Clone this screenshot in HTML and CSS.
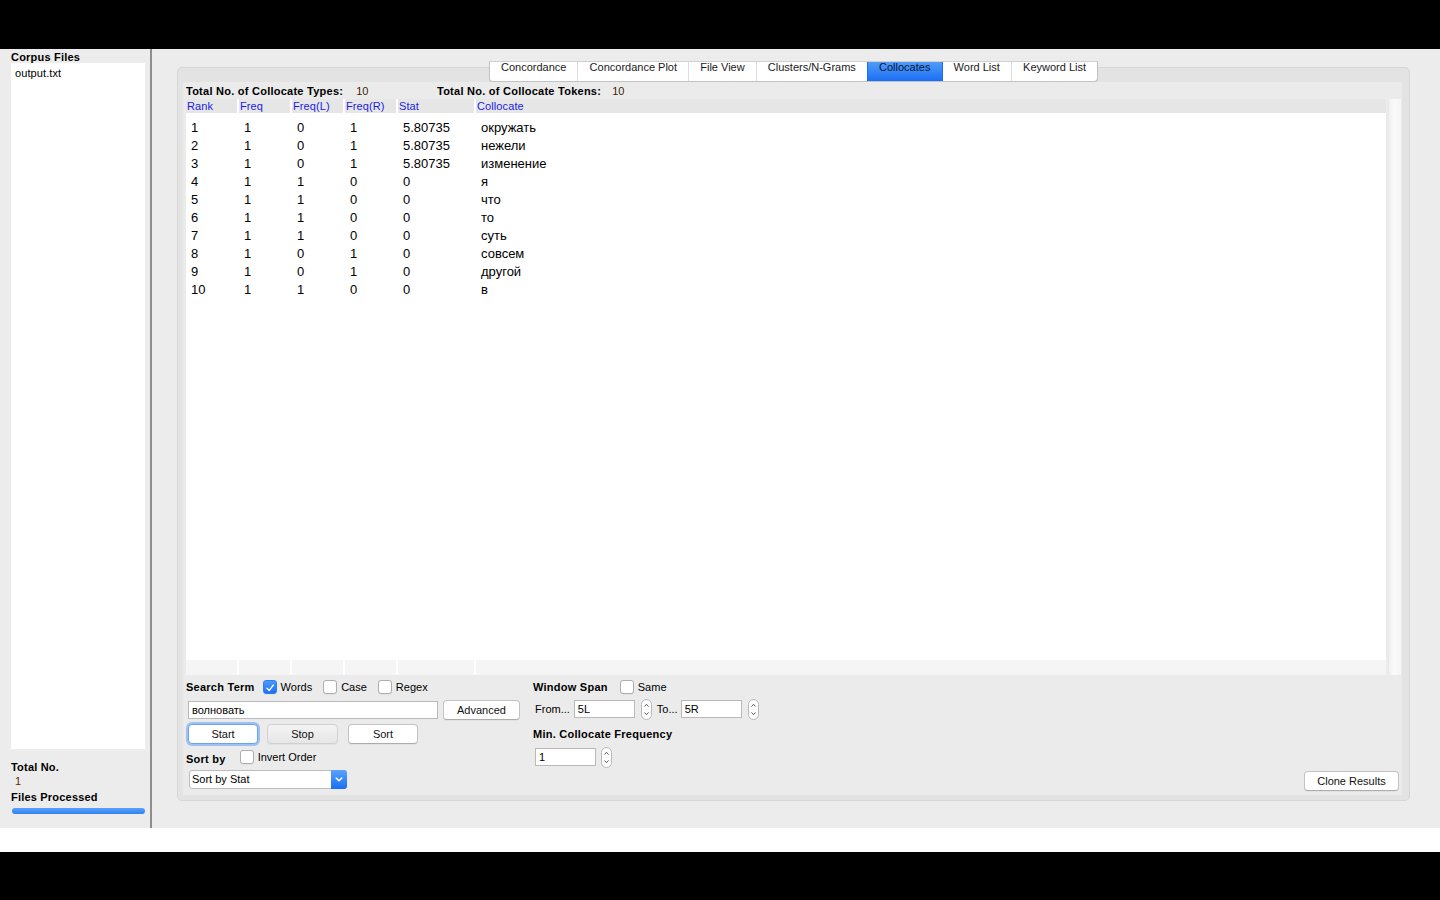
FILE: index.html
```html
<!DOCTYPE html>
<html lang="ru">
<head>
<meta charset="utf-8">
<title>AntConc - Collocates</title>
<link rel="stylesheet" href="styles.css">
</head>
<body>
<div class="screen">
  <div class="topbar"></div>
  <div class="app">
    <aside class="side">
      <div class="side-label">Corpus Files</div>
      <div class="file-list">
        <div class="file-item">output.txt</div>
      </div>
      <div class="side-bottom">
        <div class="side-label">Total No.</div>
        <div class="side-value">1</div>
        <div class="side-label files-label">Files Processed</div>
        <div class="progress"></div>
      </div>
    </aside>

    <main class="main">
      <section class="pane">
        <nav class="tabs">
          <div class="tab">Concordance</div>
          <div class="tab">Concordance Plot</div>
          <div class="tab">File View</div>
          <div class="tab">Clusters/N-Grams</div>
          <div class="tab tab-active">Collocates</div>
          <div class="tab">Word List</div>
          <div class="tab">Keyword List</div>
        </nav>

        <div class="content">
          <div class="stats">
            <div class="stat-group stat-types">
              <span class="stat-label">Total No. of Collocate Types:</span>
              <span class="stat-value">10</span>
            </div>
            <div class="stat-group">
              <span class="stat-label">Total No. of Collocate Tokens:</span>
              <span class="stat-value stat-value-2">10</span>
            </div>
          </div>

          <div class="table-wrap">
            <div class="table">
              <div class="cols thead">
                <div class="th">Rank</div>
                <div class="th">Freq</div>
                <div class="th">Freq(L)</div>
                <div class="th">Freq(R)</div>
                <div class="th">Stat</div>
                <div class="th">Collocate</div>
              </div>
              <div class="tbody">
                <div class="cols row"><div>1</div><div>1</div><div>0</div><div>1</div><div>5.80735</div><div>окружать</div></div>
                <div class="cols row"><div>2</div><div>1</div><div>0</div><div>1</div><div>5.80735</div><div>нежели</div></div>
                <div class="cols row"><div>3</div><div>1</div><div>0</div><div>1</div><div>5.80735</div><div>изменение</div></div>
                <div class="cols row"><div>4</div><div>1</div><div>1</div><div>0</div><div>0</div><div>я</div></div>
                <div class="cols row"><div>5</div><div>1</div><div>1</div><div>0</div><div>0</div><div>что</div></div>
                <div class="cols row"><div>6</div><div>1</div><div>1</div><div>0</div><div>0</div><div>то</div></div>
                <div class="cols row"><div>7</div><div>1</div><div>1</div><div>0</div><div>0</div><div>суть</div></div>
                <div class="cols row"><div>8</div><div>1</div><div>0</div><div>1</div><div>0</div><div>совсем</div></div>
                <div class="cols row"><div>9</div><div>1</div><div>0</div><div>1</div><div>0</div><div>другой</div></div>
                <div class="cols row"><div>10</div><div>1</div><div>1</div><div>0</div><div>0</div><div>в</div></div>
              </div>
              <div class="cols tfoot">
                <div></div><div></div><div></div><div></div><div></div><div></div>
              </div>
            </div>
            <div class="vscroll"></div>
          </div>

          <div class="controls">
            <div class="ctl-col ctl-left">
              <div class="ctl-row r1">
                <span class="bold-label">Search Term</span>
                <label class="check-item first">
                  <span class="cb cb-on"><svg viewBox="0 0 14 14" width="14" height="14"><path d="M3.5 7.2 L6 10 L10.8 3.6" fill="none" stroke="#fff" stroke-width="1.6" stroke-linecap="round" stroke-linejoin="round"/></svg></span>
                  <span>Words</span>
                </label>
                <label class="check-item">
                  <span class="cb"></span>
                  <span>Case</span>
                </label>
                <label class="check-item">
                  <span class="cb"></span>
                  <span>Regex</span>
                </label>
              </div>
              <div class="ctl-row r2">
                <div class="input search-input">волновать</div>
                <button class="btn btn-adv">Advanced</button>
              </div>
              <div class="ctl-row r3">
                <button class="btn btn-start">Start</button>
                <button class="btn btn-stop">Stop</button>
                <button class="btn btn-sort">Sort</button>
              </div>
              <div class="ctl-row r4">
                <span class="bold-label sortby">Sort by</span>
                <label class="check-item sort-check">
                  <span class="cb"></span>
                  <span>Invert Order</span>
                </label>
              </div>
              <div class="ctl-row r5">
                <div class="select">
                  <span class="select-text">Sort by Stat</span>
                  <span class="select-arrow"><svg viewBox="0 0 16 19" width="16" height="19"><path d="M5.2 8 L8 10.8 L10.8 8" fill="none" stroke="#fff" stroke-width="1.5" stroke-linecap="round" stroke-linejoin="round"/></svg></span>
                </div>
              </div>
            </div>

            <div class="ctl-col ctl-right">
              <div class="ctl-row r1">
                <span class="bold-label">Window Span</span>
                <label class="check-item same-check">
                  <span class="cb"></span>
                  <span>Same</span>
                </label>
              </div>
              <div class="ctl-row r2b">
                <span class="plain-label from-label">From...</span>
                <div class="input small-input">5L</div>
                <span class="stepper"><svg viewBox="0 0 11 21" width="11" height="21"><rect x="0.5" y="0.5" width="10" height="20" rx="5" fill="#fff" stroke="#b8b8b8"/><path d="M3.5 7.5 L5.5 5.3 L7.5 7.5" fill="none" stroke="#555" stroke-width="1"/><path d="M3.5 13.5 L5.5 15.7 L7.5 13.5" fill="none" stroke="#555" stroke-width="1"/></svg></span>
                <span class="plain-label to-label">To...</span>
                <div class="input small-input to-input">5R</div>
                <span class="stepper"><svg viewBox="0 0 11 21" width="11" height="21"><rect x="0.5" y="0.5" width="10" height="20" rx="5" fill="#fff" stroke="#b8b8b8"/><path d="M3.5 7.5 L5.5 5.3 L7.5 7.5" fill="none" stroke="#555" stroke-width="1"/><path d="M3.5 13.5 L5.5 15.7 L7.5 13.5" fill="none" stroke="#555" stroke-width="1"/></svg></span>
              </div>
              <div class="ctl-row r3b">
                <span class="bold-label">Min. Collocate Frequency</span>
              </div>
              <div class="ctl-row r4b">
                <div class="input small-input freq-input">1</div>
                <span class="stepper stepper-freq"><svg viewBox="0 0 11 21" width="11" height="21"><rect x="0.5" y="0.5" width="10" height="20" rx="5" fill="#fff" stroke="#b8b8b8"/><path d="M3.5 7.5 L5.5 5.3 L7.5 7.5" fill="none" stroke="#555" stroke-width="1"/><path d="M3.5 13.5 L5.5 15.7 L7.5 13.5" fill="none" stroke="#555" stroke-width="1"/></svg></span>
              </div>
            </div>

            <button class="btn btn-clone">Clone Results</button>
          </div>
        </div>
      </section>
    </main>
  </div>
  <div class="whiteband"></div>
  <div class="bottombar"></div>
</div>
</body>
</html>
```

FILE: styles.css
```css
* { box-sizing: border-box; }

html, body {
  margin: 0;
  padding: 0;
  background: #000;
}

body {
  font-family: "Liberation Sans", Arial, sans-serif;
  font-size: 11px;
  color: #000;
}

.screen {
  width: 1440px;
  height: 900px;
  display: flex;
  flex-direction: column;
}

.topbar { height: 49px; background: #000; }
.whiteband { height: 24px; background: #fff; }
.bottombar { flex: 1; background: #000; }

.app {
  height: 779px;
  display: flex;
  background: #ececec;
}

/* ---------- left side ---------- */
.side {
  width: 152px;
  border-right: 2px solid #8e8e8e;
  display: flex;
  flex-direction: column;
  padding: 2px 5px 14px 11px;
}

.side-label {
  font-weight: bold;
  line-height: 12px;
  height: 12px;
  letter-spacing: 0.2px;
}

.file-list {
  flex: 1;
  background: #fff;
  padding: 4px 4px;
}

.file-item {
  line-height: 13px;
  letter-spacing: 0.1px;
}

.side-bottom {
  margin-top: 11px;
  display: flex;
  flex-direction: column;
}

.side-bottom .side-label {
  line-height: 14px;
  height: 14px;
}

.side-value {
  line-height: 14px;
  height: 14px;
  padding-left: 4px;
  color: #5a2e02;
}

.side-bottom .files-label { margin-top: 2px; }

.progress {
  margin-top: 4px;
  margin-left: 1px;
  height: 6px;
  border-radius: 3px;
  background: linear-gradient(#5aa0f8, #2f82f2);
}

/* ---------- main ---------- */
.main {
  flex: 1;
  padding: 18px 30px 27px 25px;
  display: flex;
}

.pane {
  flex: 1;
  display: flex;
  flex-direction: column;
  background: #e3e3e3;
  border: 1px solid #d6d6d6;
  border-radius: 5px;
}

.tabs {
  align-self: center;
  margin-top: -7px;
  height: 21px;
  display: flex;
  background: #fff;
  border: 1px solid #c2c2c2;
  border-top-color: #d0d0d0;
  border-radius: 0 0 4px 4px;
  box-shadow: 0 1px 1px rgba(0,0,0,0.08);
}

.tab {
  padding: 0 11.1px;
  line-height: 11px;
  color: #1a1a1a;
  border-left: 1px solid #dcdcdc;
  white-space: nowrap;
}

.tab:first-child { border-left: none; }

.tab-active {
  background: linear-gradient(#4f9cf9, #1a6ef5);
  border-left-color: #1a6ef5;
  color: #0b1630;
}

.tab-active + .tab { border-left-color: #1a6ef5; }

.content {
  flex: 1;
  margin: 0 7px 5px 5px;
  background: #ebebeb;
  display: flex;
  flex-direction: column;
  padding: 0 1px 0 3px;
}

/* stats */
.stats {
  height: 17px;
  line-height: 19px;
  display: flex;
}

.stat-group { display: flex; }
.stat-types { width: 251px; }
.stat-label { font-weight: bold; letter-spacing: 0.25px; }
.stat-value { margin-left: 13px; color: #3d2405; }
.stat-value-2 { margin-left: 11px; }

/* table */
.table-wrap {
  flex: 1;
  display: flex;
  gap: 2px;
}

.table {
  flex: 1;
  display: flex;
  flex-direction: column;
  background: #fff;
}

.cols {
  display: grid;
  grid-template-columns: 51px 51px 51px 51px 76px 1fr;
  column-gap: 2px;
}

.thead {
  height: 14px;
  background: #fff;
}

.th {
  background: #e6e6e6;
  color: #1c1ce6;
  line-height: 14px;
  padding-left: 1px;
  letter-spacing: 0.1px;
}

.tbody {
  flex: 1;
  padding-top: 6px;
}

.row {
  height: 18px;
  line-height: 18px;
  font-size: 13px;
}

.row > div { padding-left: 5px; }

.tfoot {
  height: 15px;
  background: #fff;
}

.tfoot > div { background: #f5f5f5; }

.vscroll {
  width: 13px;
  background: linear-gradient(90deg, #f0f0f0, #fafafa 40%, #f6f6f6);
  border-left: 1px solid #e9e9e9;
}

/* controls */
.controls {
  height: 120px;
  display: flex;
}

.ctl-col {
  display: flex;
  flex-direction: column;
}

.ctl-left { width: 347px; }

.ctl-row {
  display: flex;
  align-items: center;
}

.r1 { margin-top: 5px; height: 14px; }
.r2 { margin-top: 6px; height: 20px; }
.r3 { margin-top: 4px; height: 20px; }
.r4 { margin-top: 5px; height: 16px; }
.r5 { margin-top: 5px; height: 19px; }

.r2b { margin-top: 4px; height: 22px; }
.r3b { margin-top: 6px; height: 16px; }
.r4b { margin-top: 4px; height: 22px; }

.bold-label {
  font-weight: bold;
  line-height: 14px;
  white-space: nowrap;
  letter-spacing: 0.25px;
}

.plain-label { white-space: nowrap; }

.check-item {
  display: flex;
  align-items: center;
  margin-left: 11px;
  white-space: nowrap;
}

.check-item.first { margin-left: 8px; }

.cb {
  width: 14px;
  height: 14px;
  border: 1px solid #aeaeae;
  border-radius: 3px;
  background: #fff;
  margin-right: 4px;
  display: inline-flex;
  box-shadow: 0 0.5px 0.5px rgba(0,0,0,0.08);
}

.cb svg { display: block; }

.cb-on {
  border-color: #2c7ef5;
  background: linear-gradient(#4c9af9, #1e6ff4);
}

.input {
  height: 18px;
  line-height: 16px;
  background: #fff;
  border: 1px solid #b9b9b9;
  padding: 0 3px;
  white-space: nowrap;
}

.search-input { width: 250px; margin-left: 2px; }

.btn {
  font-family: "Liberation Sans", Arial, sans-serif;
  font-size: 11px;
  color: #111;
  background: #fff;
  border: 1px solid #c3c3c3;
  border-bottom-color: #acacac;
  border-radius: 4px;
  height: 20px;
  padding: 0;
  line-height: 18px;
  box-shadow: 0 1px 0 rgba(0,0,0,0.04);
}

.btn-adv { width: 77px; margin-left: 5px; }
.btn-start {
  width: 70px;
  margin-left: 2px;
  border-color: #6fa2ea;
  box-shadow: 0 0 0 2px #9cc2f5;
}
.btn-stop {
  width: 71px;
  margin-left: 9px;
  background: linear-gradient(#f4f4f4, #e6e6e6);
  border-color: #d0d0d0;
}
.btn-sort { width: 70px; margin-left: 10px; }

.sortby { margin-top: 4px; }
.sort-check { margin-left: 14px; }

.select {
  width: 158px;
  height: 19px;
  margin-left: 3px;
  display: flex;
  background: #fff;
  border: 1px solid #bdbdbd;
  border-radius: 3px;
}

.select-text {
  flex: 1;
  line-height: 17px;
  padding-left: 2px;
}

.select-arrow {
  width: 16px;
  margin: -1px -1px -1px 0;
  height: 19px;
  border-radius: 0 3px 3px 0;
  background: linear-gradient(#5aa3fb, #1a6ef4);
}

.select-arrow svg { display: block; }

.ctl-right {
  width: 240px;
}

.same-check { margin-left: 12px; }

.from-label { margin-left: 2px; }
.small-input { width: 61px; margin-left: 4px; }
.to-input { margin-left: 3px; }
.stepper { margin-left: 6px; display: inline-flex; }
.to-label { margin-left: 5px; }
.freq-input { margin-left: 2px; }
.stepper-freq { margin-left: 5px; }

.btn-clone {
  margin-left: auto;
  align-self: flex-end;
  margin-bottom: 4px;
  margin-right: 2px;
  width: 95px;
}
```
